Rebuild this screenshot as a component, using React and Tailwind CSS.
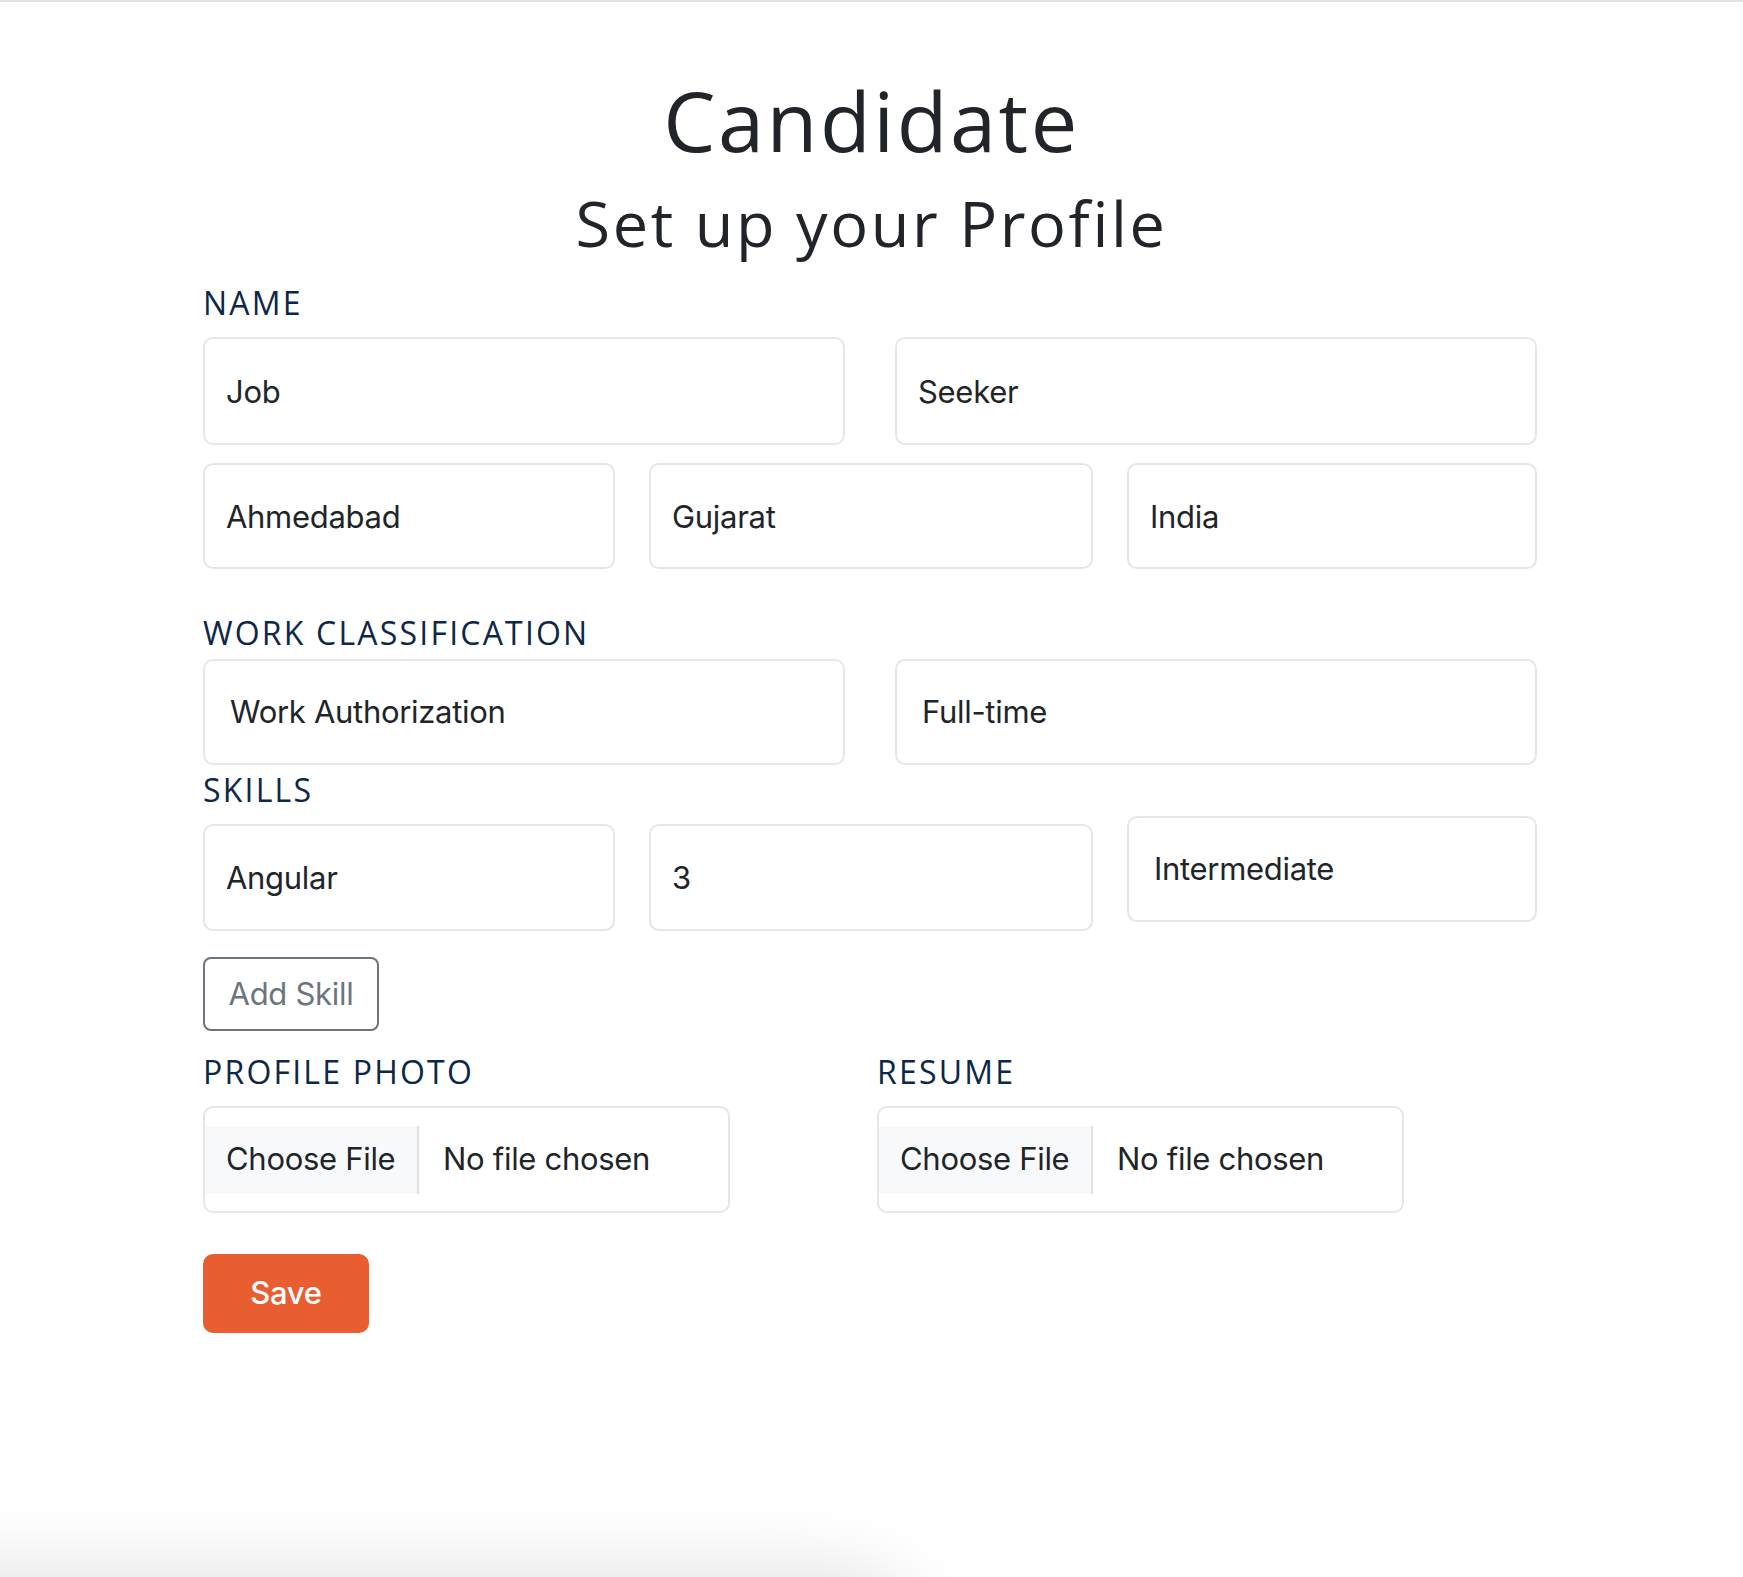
import React from 'react';

const fieldCls =
    "w-full rounded-[10px] border-2 border-[#e4e6e9] bg-white font-[Inter,sans-serif] text-[31px] tracking-[-0.3px] text-[#212529] outline-none";

function Label({ children, className = '' }) {
    return (
        <div className={`font-['Open_Sans',sans-serif] text-[32px] leading-none tracking-[2.2px] text-[#0d2748] ${className}`}>
            {children}
        </div>
    );
}

function TextInput({ value, className = '' }) {
    return <input readOnly value={value} className={`${fieldCls} px-[21px] ${className}`} />;
}

function Select({ value, className = '' }) {
    return (
        <select value={value} onChange={() => {}} className={`${fieldCls} appearance-none px-[25px] ${className}`}>
            <option>{value}</option>
        </select>
    );
}

function FileInput() {
    return (
        <div className="flex h-[107px] items-center rounded-[10px] border-2 border-[#e4e6e9] font-[Inter,sans-serif] text-[31px] tracking-[-0.3px] text-[#212529]">
            <div className="flex h-[68px] w-[214px] items-center border-r-2 border-[#dee2e6] bg-[#f8f9fa] pl-[21px]">
                Choose File
            </div>
            <div className="pl-[24px]">No file chosen</div>
        </div>
    );
}

export default function App() {
    return (
        <div className="relative h-[1577px] overflow-hidden border-t-2 border-[#e3e3e3] bg-white">
            {/* heading */}
            <h1 className="mt-[76px] text-center font-['Open_Sans',sans-serif] text-[83px] leading-none tracking-[2.5px] text-[#212529]">
                Candidate
            </h1>
            <h2 className="mt-[30px] text-center font-['Open_Sans',sans-serif] text-[63px] leading-none tracking-[2.6px] text-[#212529]">
                Set up your Profile
            </h2>

            <div className="ml-[203px] w-[1334px]">
                {/* name + location */}
                <Label className="mt-[33px]">NAME</Label>
                <div className="mt-[18px] grid grid-cols-2 gap-[50px]">
                    <TextInput value="Job" className="h-[108px]" />
                    <TextInput value="Seeker" className="h-[108px]" />
                </div>
                <div className="mt-[18px] grid grid-cols-[412px_444px_410px] gap-[34px]">
                    <TextInput value="Ahmedabad" className="h-[106px]" />
                    <TextInput value="Gujarat" className="h-[106px]" />
                    <TextInput value="India" className="h-[106px]" />
                </div>

                {/* work classification */}
                <Label className="mt-[48px]">WORK CLASSIFICATION</Label>
                <div className="mt-[10px] grid grid-cols-2 gap-[50px]">
                    <Select value="Work Authorization" className="h-[106px]" />
                    <Select value="Full-time" className="h-[106px]" />
                </div>

                {/* skills */}
                <Label className="mt-[9px]">SKILLS</Label>
                <div className="mt-[10px] grid grid-cols-[412px_444px_410px] items-start gap-[34px]">
                    <TextInput value="Angular" className="mt-[8px] h-[107px]" />
                    <TextInput value="3" className="mt-[8px] h-[107px]" />
                    <Select value="Intermediate" className="h-[106px]" />
                </div>
                <button className="mt-[26px] h-[74px] w-[176px] rounded-[8px] border-2 border-[#6c757d] text-center font-[Inter,sans-serif] text-[31px] tracking-[-0.3px] text-[#6c757d]">
                    Add Skill
                </button>

                {/* uploads */}
                <div className="mt-[25px] grid grid-cols-[527px_527px] gap-[147px]">
                    <div>
                        <Label>PROFILE PHOTO</Label>
                        <div className="mt-[18px]">
                            <FileInput />
                        </div>
                    </div>
                    <div>
                        <Label>RESUME</Label>
                        <div className="mt-[18px]">
                            <FileInput />
                        </div>
                    </div>
                </div>

                <button className="mt-[41px] h-[79px] w-[166px] rounded-[10px] bg-[#e95e31] font-[Inter,sans-serif] text-[31px] font-medium tracking-[-0.3px] text-white">
                    Save
                </button>
            </div>

            {/* shadow of something just below the fold */}
            <div className="absolute left-[-200px] top-[1600px] h-[200px] w-[1100px] rounded-[70px] bg-white shadow-[0_0_80px_25px_rgba(0,0,0,0.14)]" />
        </div>
    );
}
